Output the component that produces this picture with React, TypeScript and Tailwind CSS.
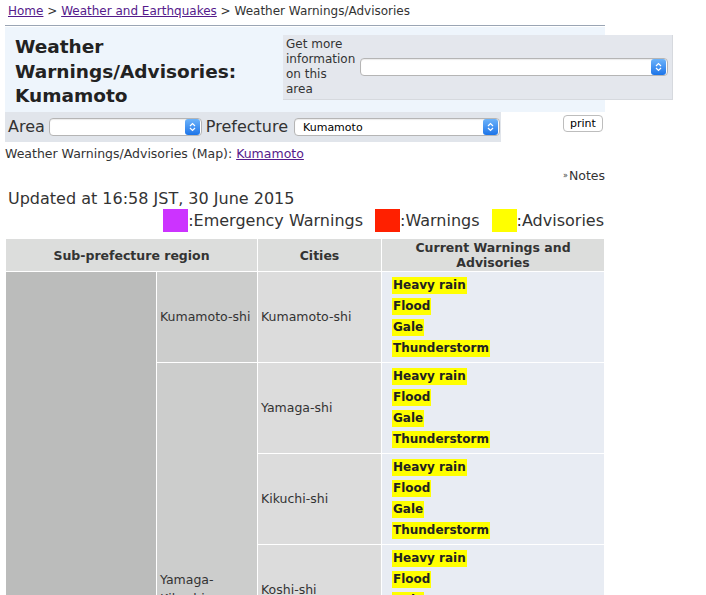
import React from 'react'

const FONT = { fontFamily: '"DejaVu Sans", Verdana, sans-serif' }

const SelectBox = ({ value, className }: { value?: string; className: string }) => (
  <div className={`flex items-center bg-white border border-[#b5b5b5] rounded-[4px] h-[18px] shadow-[inset_0_1px_1px_rgba(0,0,0,0.08)] ${className}`}>
    <span className="flex-1 pl-2 text-[11px] text-black leading-none truncate">{value}</span>
    <span className="w-[15px] h-[16px] mr-[1px] rounded-[3px] bg-gradient-to-b from-[#6cb3fa] to-[#1a74e8] flex items-center justify-center">
      <svg width="7" height="10" viewBox="0 0 7 10">
        <path d="M1 4 L3.5 1.5 L6 4 M1 6 L3.5 8.5 L6 6" fill="none" stroke="white" strokeWidth="1.2" />
      </svg>
    </span>
  </div>
)

const Tags = () => (
  <div className="flex flex-col items-start gap-[4px]">
    {['Heavy rain', 'Flood', 'Gale', 'Thunderstorm'].map(t => (
      <span key={t} className="bg-[#ffff00] px-[1px] text-[12px] font-bold text-[#222] leading-[17px]">{t}</span>
    ))}
  </div>
)

const yamaga = ['Yamaga-shi', 'Kikuchi-shi', 'Koshi-shi', 'Ozu-machi', 'Kikuyo-machi']
const uki = ['Uto-shi', 'Uki-shi', 'Misato-machi', 'Mashiki-machi', 'Kosa-machi', 'Kashima-machi']

const App = () => {
  return (
    <div className="w-[706px] h-[595px] overflow-hidden bg-white text-[#333]" style={FONT}>
      {/* breadcrumb */}
      <div className="pl-[8px] pt-[3px] pb-[6px] text-[12px] leading-[16px] text-[#333]">
        <a className="text-[#551a8b] underline">Home</a> &gt;{' '}
        <a className="text-[#551a8b] underline">Weather and Earthquakes</a> &gt; Weather Warnings/Advisories
      </div>
      <div className="ml-[5px] w-[600px] border-t border-[#9aa5b4]" />

      {/* title box */}
      <div className="ml-[5px] mt-[1px] w-[600px] bg-[#eef5fc] flex h-[85px]">
        <h1 className="w-[278px] shrink-0 pl-[10px] pt-[8px] text-[18.5px] font-bold leading-[24.5px] text-[#222]">
          Weather Warnings/Advisories: Kumamoto
        </h1>
        <div className="mt-[8px] w-[390px] h-[65px] bg-[#e4e7ed] border-r border-b border-[#d6d9de] flex items-center shrink-0">
          <div className="w-[74px] shrink-0 pl-[3px] text-[12px] leading-[15px] text-[#333]">Get more information on this area</div>
          <SelectBox className="w-[308px] ml-[3px]" />
        </div>
      </div>

      {/* area row */}
      <div className="flex items-start">
        <div className="ml-[5px] w-[496px] h-[30px] bg-[#e1e5eb] flex items-center text-[16px] text-[#333]">
          <span className="pl-[3px] pr-[4px]">Area</span>
          <SelectBox className="w-[153px]" />
          <span className="pl-[4px] pr-[6px]">Prefecture</span>
          <SelectBox value="Kumamoto" className="w-[206px]" />
        </div>
        <button className="ml-[62px] mt-[3px] h-[17px] px-[6px] border border-[#bdbdbd] rounded-[4px] bg-white text-[11px] leading-none text-black">
          print
        </button>
      </div>

      <div className="pl-[5px] pt-[4px] text-[12.5px] leading-[16px]">
        Weather Warnings/Advisories (Map): <a className="text-[#551a8b] underline">Kumamoto</a>
      </div>

      <div className="w-[605px] flex justify-end items-center pt-[6px] text-[12.5px] leading-[16px]">
        <span className="text-[8px] mr-[1px]">&raquo;</span>Notes
      </div>

      <div className="pl-[8px] pt-[5px] text-[16px] leading-[20px]">Updated at 16:58 JST, 30 June 2015</div>
      <div className="w-[604px] flex justify-end items-center text-[16px] leading-[20px]">
        <span className="w-[25px] h-[23px] bg-[#cc33ff]" />
        <span>:Emergency Warnings</span>
        <span className="w-[25px] h-[23px] bg-[#ff2000] ml-[12px]" />
        <span>:Warnings</span>
        <span className="w-[25px] h-[23px] bg-[#ffff00] ml-[12px]" />
        <span>:Advisories</span>
      </div>

      {/* table */}
      <table className="ml-[5px] mt-[6px] w-[600px] border-collapse text-[12.5px] table-fixed">
        <colgroup>
          <col className="w-[151px]" />
          <col className="w-[101px]" />
          <col className="w-[124px]" />
          <col />
        </colgroup>
        <thead>
          <tr className="h-[33px] bg-[#dcdddc] font-bold text-[#333] leading-[15px]">
            <th colSpan={2} className="border border-white">Sub-prefecture region</th>
            <th className="border border-white">Cities</th>
            <th className="border border-white px-[20px]">Current Warnings and Advisories</th>
          </tr>
        </thead>
        <tbody>
          <tr className="h-[91px]">
            <td rowSpan={1 + yamaga.length + uki.length} className="bg-[#bbbcbb] border border-white align-middle px-[3px]">
              Kumamoto region
            </td>
            <td className="bg-[#cccdcc] border border-white px-[3px]">Kumamoto-shi</td>
            <td className="bg-[#dcdcdc] border border-white px-[3px]">Kumamoto-shi</td>
            <td className="bg-[#e8ecf3] border border-white pl-[10px] py-[4px]"><Tags /></td>
          </tr>
          {yamaga.map((c, i) => (
            <tr key={c} className="h-[91px]">
              {i === 0 && (
                <td rowSpan={yamaga.length} className="bg-[#cccdcc] border border-white px-[3px] align-middle">
                  Yamaga-Kikuchi
                </td>
              )}
              <td className="bg-[#dcdcdc] border border-white px-[3px]">{c}</td>
              <td className="bg-[#e8ecf3] border border-white pl-[10px] py-[4px]"><Tags /></td>
            </tr>
          ))}
          {uki.map((c, i) => (
            <tr key={c} className="h-[91px]">
              {i === 0 && (
                <td rowSpan={uki.length} className="bg-[#cccdcc] border border-white px-[3px] align-middle">
                  Uki-Kamimashiki
                </td>
              )}
              <td className="bg-[#dcdcdc] border border-white px-[3px]">{c}</td>
              <td className="bg-[#e8ecf3] border border-white pl-[10px] py-[4px]"><Tags /></td>
            </tr>
          ))}
        </tbody>
      </table>
    </div>
  )
}

export default App
